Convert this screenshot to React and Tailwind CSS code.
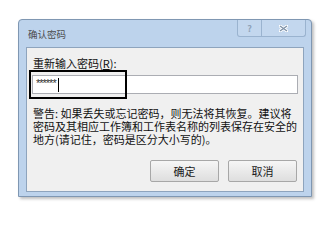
import React from 'react';

const font = { fontFamily: '"Noto Sans CJK SC", "Liberation Sans", sans-serif' };

function TitleButtons() {
  return (
    <div className="flex h-[17px] self-start">
      <div className="w-[25px] flex items-center justify-center border border-t-0 border-[#9ab3cf] rounded-bl-[3px] bg-[#c3d7ee] text-[9px] font-bold text-[#8fa2b8] leading-none">
        ?
      </div>
      <div className="w-[44px] flex items-center justify-center border border-t-0 border-l-0 border-[#9ab3cf] rounded-br-[3px] bg-[#c3d7ee]">
        <svg width="9" height="7" viewBox="0 0 9 7">
          <path d="M1 1 L8 6 M8 1 L1 6" stroke="#ffffff" strokeWidth="3" strokeLinecap="square" />
          <path d="M1 1 L8 6 M8 1 L1 6" stroke="#7f92a8" strokeWidth="1.4" />
        </svg>
      </div>
    </div>
  );
}

function DialogButton({ children }) {
  return (
    <button className="w-[69px] h-[22px] rounded-[2px] border border-[#a7a7a7] bg-gradient-to-b from-[#f6f6f6] to-[#dedede] text-[11px] leading-none text-[#1a1a1a]">
      {children}
    </button>
  );
}

export default function App() {
  return (
    <div className="w-[327px] h-[213px] bg-white pt-[19px] pl-[18px]" style={font}>
      <div className="w-[294px] h-[178px] flex flex-col border border-[#7f97b2] bg-[#bdd3ec] rounded-t-[4px] shadow-[2px_2px_3px_rgba(0,0,0,0.25)]">
        <div className="h-[27px] flex justify-between pl-[9px] pr-[5px]">
          <span className="self-center text-[9.5px] text-[#4c4c4c] leading-none pt-[2px]">确认密码</span>
          <TitleButtons />
        </div>
        <div className="mx-[7px] mb-[4px] flex-1 flex flex-col border border-[#8ea4bd] bg-[#f0f0f0]">
          <div className="pt-[9px] px-[6px] text-[11px] leading-[13px] text-[#111]">
            重新输入密码(<span className="underline">R</span>):
          </div>
          <div className="relative mt-[5px] mx-[5px]">
            <div className="h-[19px] flex items-center border border-[#abadb3] bg-white pl-[3px]">
              <span className="text-[11px] leading-none text-[#333] tracking-[-1px] -mt-[2px]" style={{ fontFamily: '"Liberation Sans", sans-serif' }}>******</span>
              <span className="ml-[2px] w-[1px] h-[14px] bg-black" />
            </div>
            <div className="absolute left-[-3px] top-[-5px] w-[98px] h-[29px] border-2 border-black" />
          </div>
          <p className="mt-[13px] px-[6px] text-[11px] leading-[13px] text-[#111]">
            警告: 如果丢失或忘记密码，则无法将其恢复。建议将密码及其相应工作簿和工作表名称的列表保存在安全的地方(请记住，密码是区分大小写的)。
          </p>
          <div className="mt-auto mb-[9px] pr-[6px] flex justify-end gap-[9px]">
            <DialogButton>确定</DialogButton>
            <DialogButton>取消</DialogButton>
          </div>
        </div>
      </div>
    </div>
  );
}
